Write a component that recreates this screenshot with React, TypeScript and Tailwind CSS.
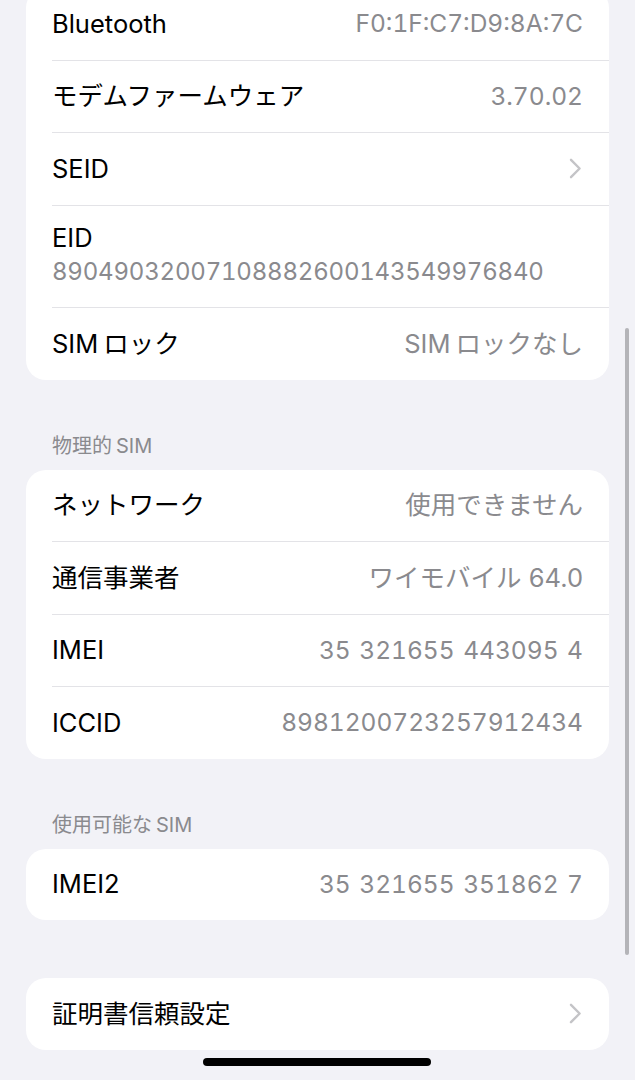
type Row = { label: string; value?: string; chevron?: boolean; stacked?: boolean; num?: boolean };

const about: Row[] = [
  { label: "Bluetooth", value: "F0:1F:C7:D9:8A:7C", num: true },
  { label: "モデムファームウェア", value: "3.70.02", num: true },
  { label: "SEID", chevron: true },
  { label: "EID", value: "89049032007108882600143549976840", stacked: true, num: true },
  { label: "SIMロック", value: "SIMロックなし" },
];

const physical: Row[] = [
  { label: "ネットワーク", value: "使用できません" },
  { label: "通信事業者", value: "ワイモバイル 64.0" },
  { label: "IMEI", value: "35 321655 443095 4", num: true },
  { label: "ICCID", value: "8981200723257912434", num: true },
];

const available: Row[] = [{ label: "IMEI2", value: "35 321655 351862 7", num: true }];

const trust: Row[] = [{ label: "証明書信頼設定", chevron: true }];

// "SIM" next to kana/kanji gets a small gap in the original
function SimText({ text }: { text: string }) {
  const idx = text.indexOf("SIM");
  if (idx < 0) return <>{text}</>;
  const before = text.slice(0, idx);
  const after = text.slice(idx + 3);
  return (
    <>
      {before && <span className="mr-[4px]">{before}</span>}
      <span className={after ? "mr-[5px]" : ""}>SIM</span>
      {after}
    </>
  );
}

function Chevron() {
  return (
    <svg width="13" height="21" viewBox="0 0 13 21" fill="none" className="mr-[1px]">
      <path d="M2 1.8 L10.6 10.5 L2 19.2" stroke="#c4c4c7" strokeWidth="2.4" strokeLinecap="round" strokeLinejoin="round" />
    </svg>
  );
}

function Group({ rows, className = "" }: { rows: Row[]; className?: string }) {
  return (
    <div className={`mx-[26px] rounded-[20px] bg-white pl-[26px] ${className}`}>
      {rows.map((r, i) => {
        const last = i === rows.length - 1;
        const valueCls = r.num ? "text-[24.5px] tabular-nums [word-spacing:2px]" : "text-[25.5px]";
        return (
          <div key={r.label} className={last ? "" : "border-b border-[#e3e3e7]"}>
            {r.stacked ? (
              <div className="flex h-[101.5px] flex-col justify-center pr-[26px]">
                <span className="text-[25.5px] leading-[32px] text-black">{r.label}</span>
                <span className="text-[24px] leading-[36px] tracking-[-0.2px] tabular-nums text-[#8a8a8e]">{r.value}</span>
              </div>
            ) : (
              <div className="flex h-[71.5px] items-center justify-between pr-[26px]">
                <span className="text-[25.5px] text-black">
                  <SimText text={r.label} />
                </span>
                {r.chevron ? (
                  <Chevron />
                ) : (
                  <span className={`${valueCls} text-[#8a8a8e]`}>
                    <SimText text={r.value ?? ""} />
                  </span>
                )}
              </div>
            )}
          </div>
        );
      })}
    </div>
  );
}

function Header({ children }: { children: string }) {
  return (
    <div className="px-[52px] pt-[54px] pb-[12px] text-[20px] leading-[24px] text-[#8a8a8e]">
      <SimText text={children} />
    </div>
  );
}

export default function App() {
  return (
    <div
      className="relative h-[1080px] w-[635px] overflow-hidden bg-[#f2f2f7]"
      style={{ fontFamily: '"Inter", "Noto Sans CJK JP", sans-serif' }}
    >
      <Group rows={about} className="mt-[-12px]" />
      <Header>物理的SIM</Header>
      <Group rows={physical} />
      <Header>使用可能なSIM</Header>
      <Group rows={available} />
      <Group rows={trust} className="mt-[58px]" />

      {/* scroll indicator */}
      <div className="absolute left-[625px] top-[328px] h-[627px] w-[4px] rounded-full bg-[#b4b4b8]" />
      {/* home indicator */}
      <div className="absolute left-[203px] top-[1058px] h-[8px] w-[228px] rounded-full bg-black" />
    </div>
  );
}
